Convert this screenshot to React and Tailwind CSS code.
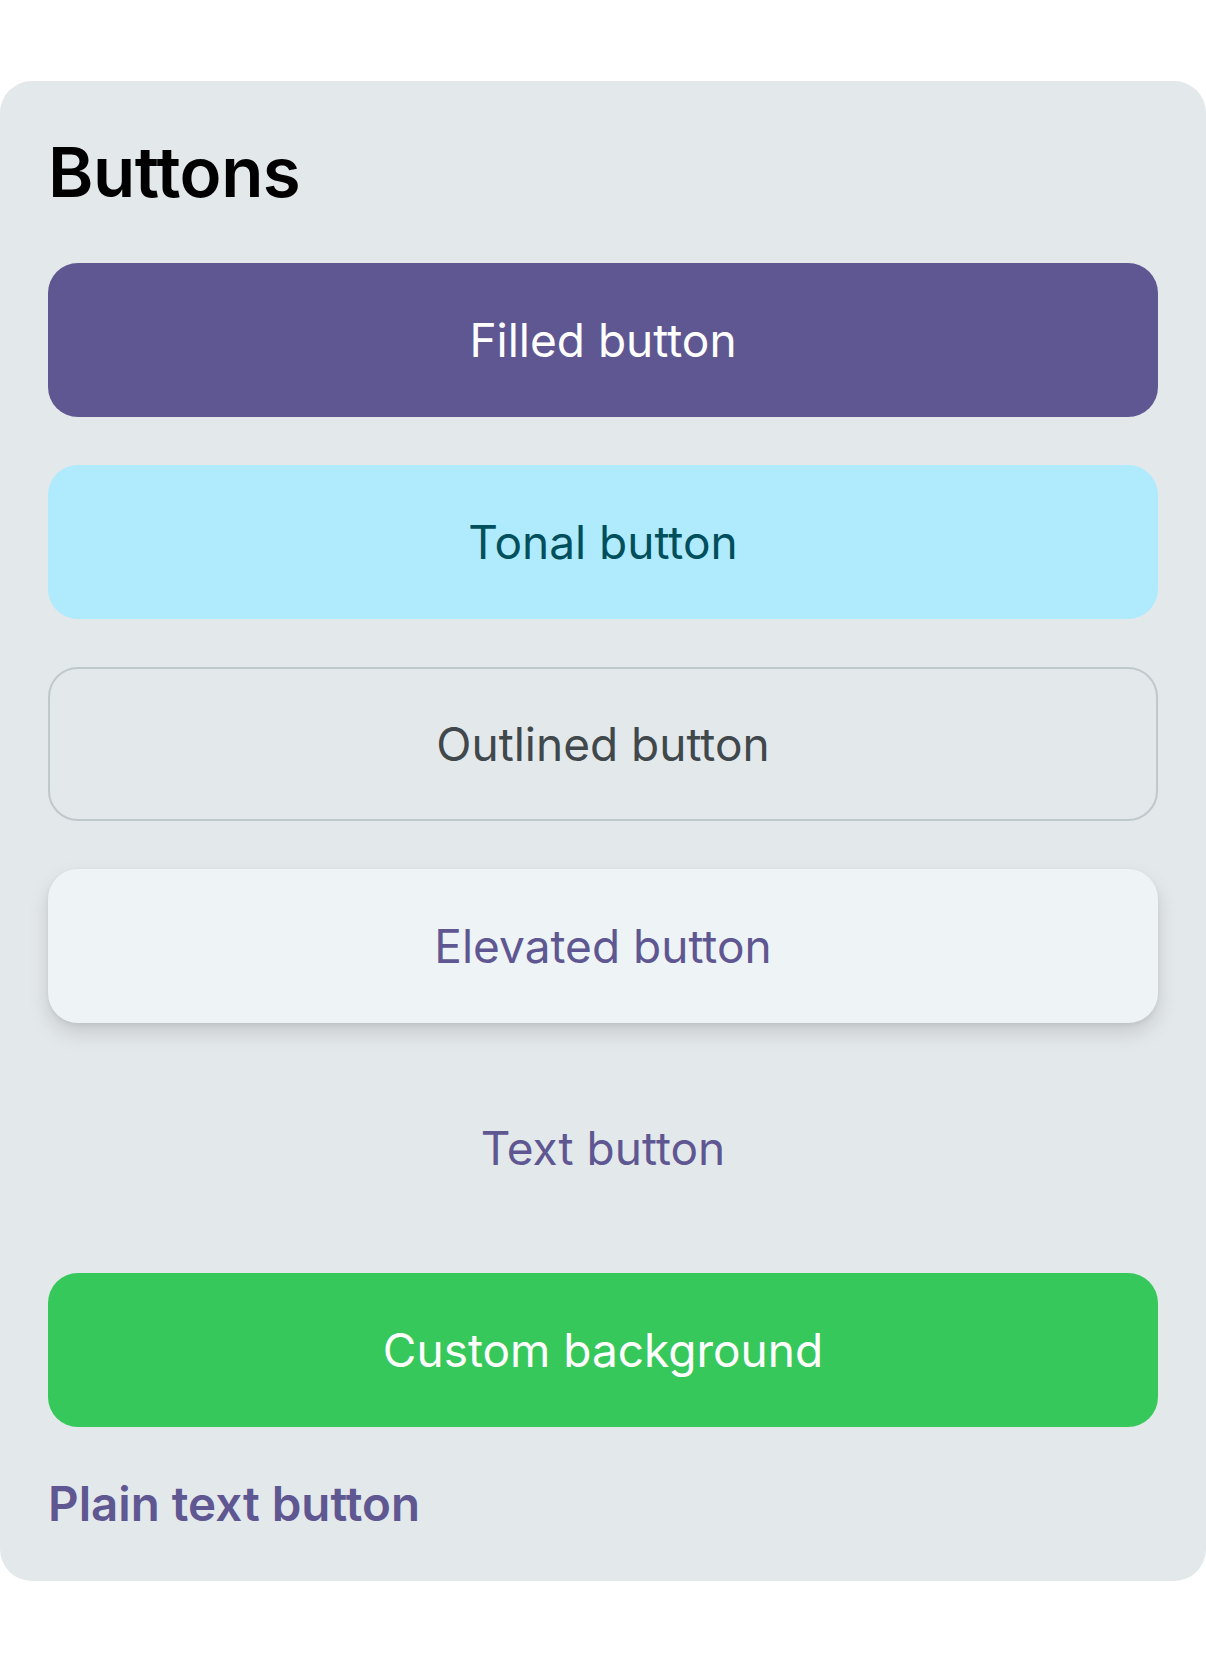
import React from 'react';

const buttons = [
  { label: 'Filled button', className: 'bg-[#5f5791] text-white' },
  { label: 'Tonal button', className: 'bg-[#b0eafd] text-[#004f5c]' },
  { label: 'Outlined button', className: 'border-2 border-[#bfc8ca] text-[#41484b]' },
  { label: 'Elevated button', className: 'bg-[#eef3f6] text-[#5f5791] shadow-[0_10px_20px_rgba(0,0,0,0.13),0_2px_5px_rgba(0,0,0,0.06)]' },
  { label: 'Text button', className: 'text-[#5f5791]' },
  { label: 'Custom background', className: 'bg-[#36c85b] text-white' },
];

export default function App() {
  return (
    <div className="min-h-screen bg-white pt-[81px] font-['Inter',sans-serif]">
      <div className="rounded-[32px] bg-[#e3e8eb] px-12 pt-[50px] pb-12">
        <h1 className="text-[69px] font-semibold leading-[1.21] text-black tracking-[-0.5px]">Buttons</h1>

        {/* button variants */}
        <div className="mt-[49px] flex flex-col gap-12">
          {buttons.map((b) => (
            <button
              key={b.label}
              className={`flex h-[154px] w-full items-center justify-center rounded-[30px] text-[46px] font-normal ${b.className}`}
            >
              {b.label}
            </button>
          ))}
        </div>

        <button className="mt-12 block text-[47.5px] font-semibold leading-[1.21] text-[#5f5791]">
          Plain text button
        </button>
      </div>
    </div>
  );
}
